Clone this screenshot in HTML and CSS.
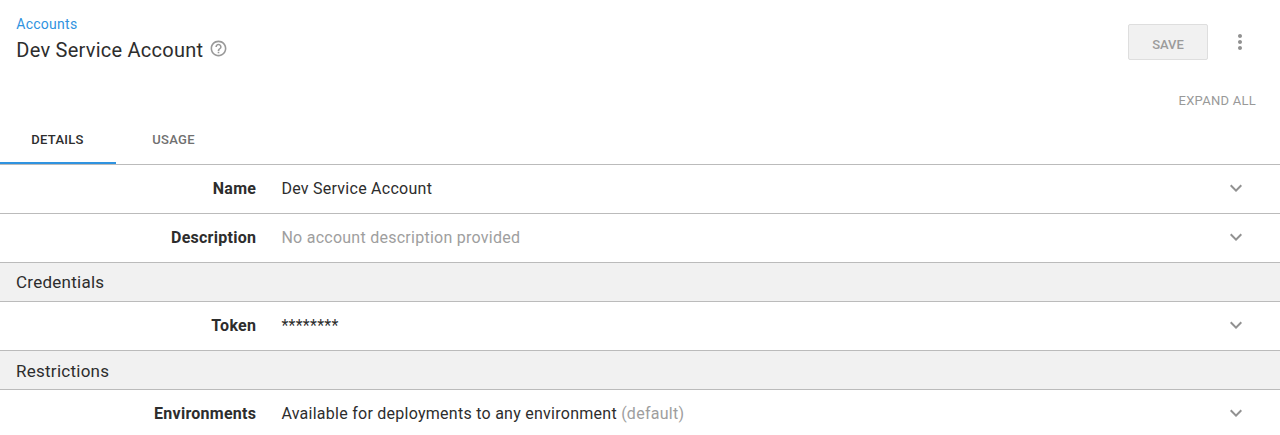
FILE: index.html
```html
<!DOCTYPE html>
<html lang="en">
<head>
<meta charset="utf-8">
<title>Dev Service Account</title>
<link rel="stylesheet" href="styles.css">
</head>
<body>
<header class="header">
  <div class="heading">
    <a class="breadcrumb">Accounts</a>
    <h1 class="title">Dev Service Account
      <svg class="help" viewBox="0 0 24 24"><path d="M11 18h2v-2h-2v2zm1-16C6.48 2 2 6.48 2 12s4.48 10 10 10 10-4.48 10-10S17.52 2 12 2zm0 18c-4.41 0-8-3.59-8-8s3.59-8 8-8 8 3.59 8 8-3.59 8-8 8zm0-14c-2.21 0-4 1.79-4 4h2c0-1.1.9-2 2-2s2 .9 2 2c0 2-3 1.75-3 5h2c0-2.25 3-2.5 3-5 0-2.21-1.79-4-4-4z"/></svg>
    </h1>
  </div>
  <div class="actions">
    <button class="save" disabled>SAVE</button>
    <svg class="more" viewBox="0 0 24 24"><path d="M12 8c1.1 0 2-.9 2-2s-.9-2-2-2-2 .9-2 2 .9 2 2 2zm0 2c-1.1 0-2 .9-2 2s.9 2 2 2 2-.9 2-2-.9-2-2-2zm0 6c-1.1 0-2 .9-2 2s.9 2 2 2 2-.9 2-2-.9-2-2-2z"/></svg>
  </div>
</header>
<div class="toolbar"><span>EXPAND ALL</span></div>
<nav class="tabs"><a class="tab active">DETAILS</a><a class="tab">USAGE</a></nav>
<main>
  <div class="row"><div class="label">Name</div><div class="value">Dev Service Account</div><svg class="chevron" viewBox="0 0 24 24"><path d="M16.59 8.59L12 13.17 7.41 8.59 6 10l6 6 6-6z"/></svg></div>
  <div class="row"><div class="label">Description</div><div class="value muted">No account description provided</div><svg class="chevron" viewBox="0 0 24 24"><path d="M16.59 8.59L12 13.17 7.41 8.59 6 10l6 6 6-6z"/></svg></div>
  <h2 class="section">Credentials</h2>
  <div class="row"><div class="label">Token</div><div class="value">********</div><svg class="chevron" viewBox="0 0 24 24"><path d="M16.59 8.59L12 13.17 7.41 8.59 6 10l6 6 6-6z"/></svg></div>
  <h2 class="section section-low">Restrictions</h2>
  <div class="row"><div class="label">Environments</div><div class="value">Available for deployments to any environment <span class="muted">(default)</span></div><svg class="chevron" viewBox="0 0 24 24"><path d="M16.59 8.59L12 13.17 7.41 8.59 6 10l6 6 6-6z"/></svg></div>
</main>
</body>
</html>
```
FILE: styles.css
```css
* { box-sizing: border-box; }
body { margin: 0; height: 435px; overflow: hidden; background: #fff; color: #2d2d2d; font-family: Roboto, sans-serif; font-size: 16px; letter-spacing: 0.26px; }
.header { display: flex; justify-content: space-between; height: 84px; padding: 14px 28px 0 16px; }
.heading { display: flex; flex-direction: column; }
.breadcrumb { padding-left: 0.3px; color: #2f93e0; font-size: 14px; line-height: 20px; }
.title { display: flex; align-items: center; gap: 7px; margin: 4px 0 0; padding-left: 0.3px; font-size: 20px; font-weight: 400; line-height: 24px; letter-spacing: 0.25px; }
.help { width: 19px; height: 19px; margin: -3px 0 0 -1px; fill: #999; }
.actions { display: flex; align-items: center; gap: 20px; height: 36px; margin-top: 10px; }
.save { width: 80px; height: 36px; padding: 4px 0 0; border: 1px solid #dedede; border-radius: 2px; background: #f1f1f1; color: #9b9b9b; font: 500 13px Roboto, sans-serif; }
.more { width: 24px; height: 24px; fill: #919191; }
.toolbar { display: flex; justify-content: flex-end; height: 32px; padding: 7px 24px 0 0; color: #999; font-size: 13px; line-height: 20px; }
.tabs { display: flex; height: 49px; border-bottom: 1px solid #bbb; }
.tab { width: 116px; height: 48px; padding-right: 1px; line-height: 48px; text-align: center; color: #707070; font-size: 13px; font-weight: 500; letter-spacing: 0.3px; }
.active { color: #2d2d2d; border-bottom: 2px solid #2f93e0; }
.row { display: flex; align-items: center; height: 49px; padding: 0 32px 1px 0; border-bottom: 1px solid #bbb; }
.label { width: 256.2px; margin-right: 25.2px; text-align: right; font-weight: 700; }
.value { flex: 1; }
.muted { color: #9e9e9e; }
.chevron { width: 24px; height: 24px; margin-bottom: 1px; fill: #919191; }
.section { height: 39px; margin: 0; padding-left: 16px; border-bottom: 1px solid #bbb; background: #f1f1f1; font-size: 17px; font-weight: 400; line-height: 39px; }
.section-low { line-height: 41px; }
```
